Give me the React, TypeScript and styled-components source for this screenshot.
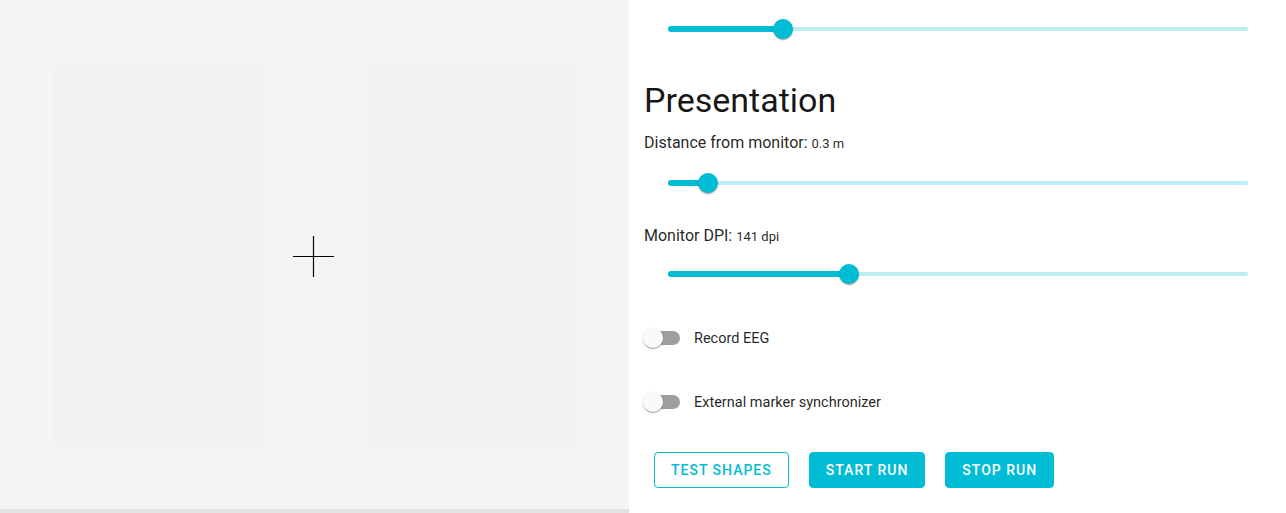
import React from "react";
import styled, { createGlobalStyle } from "styled-components";

const Global = createGlobalStyle`
  html, body { margin: 0; padding: 0; background: #ffffff; }
  body { font-family: Roboto, "Noto Sans", Arial, sans-serif; }
  * { box-sizing: border-box; }
`;

const CYAN = "#00bcd4";

const Page = styled.div`
  display: flex;
  width: 1286px;
  height: 513px;
  overflow: hidden;
`;

const LeftPane = styled.div`
  width: 629px;
  flex: none;
  display: flex;
  flex-direction: column;
  background: #f4f4f4;
`;

const Stage = styled.div`
  flex: 1;
  display: flex;
  align-items: flex-start;
  padding: 65px 53px 0 52px;
`;

const ShapePanel = styled.div`
  width: 210px;
  height: 382px;
  background: #f2f2f2;
`;

const FixationGap = styled.div`
  width: 105px;
  height: 382px;
  display: flex;
  align-items: center;
  justify-content: center;
`;

const ScrollTrack = styled.div`
  height: 4px;
  background: #e3e3e3;
  flex: none;
`;

const RightPane = styled.div`
  flex: 1;
  background: #ffffff;
  display: flex;
  flex-direction: column;
  padding: 3px 14px 0 15px;
`;

const SliderRow = styled.div<{ $h: number }>`
  height: ${(p) => p.$h}px;
  padding: 0 24px;
  display: flex;
  align-items: center;
`;

const Rail = styled.div`
  position: relative;
  flex: 1;
  height: 4px;
  border-radius: 2px;
  background: #bdedf4;
`;

const Track = styled.div`
  position: absolute;
  left: 0;
  top: -1px;
  height: 6px;
  border-radius: 3px;
  background: ${CYAN};
`;

const Thumb = styled.div`
  position: absolute;
  top: 50%;
  width: 20px;
  height: 20px;
  margin: -10px 0 0 -10px;
  border-radius: 50%;
  background: ${CYAN};
  box-shadow: 0 2px 1px -1px rgba(0, 0, 0, 0.2), 0 1px 1px 0 rgba(0, 0, 0, 0.14),
    0 1px 3px 0 rgba(0, 0, 0, 0.12);
`;

const Heading = styled.h2`
  margin: 24px 0 0 0;
  font-size: 34px;
  font-weight: 400;
  line-height: 42px;
  color: rgba(0, 0, 0, 0.92);
`;

const FieldLabel = styled.div<{ $mt: number }>`
  margin-top: ${(p) => p.$mt}px;
  font-size: 16px;
  line-height: 24px;
  color: rgba(0, 0, 0, 0.87);
`;

const FieldValue = styled.span`
  font-size: 13px;
`;

const SwitchRow = styled.label<{ $mt: number }>`
  margin-top: ${(p) => p.$mt}px;
  height: 38px;
  display: flex;
  align-items: center;
  margin-left: -1px;
`;

const SwitchBox = styled.span`
  position: relative;
  width: 37px;
  height: 20px;
  flex: none;
  display: flex;
  align-items: center;
`;

const SwitchTrack = styled.span`
  margin-left: 3px;
  width: 34px;
  height: 14px;
  border-radius: 7px;
  background: #9e9e9e;
`;

const SwitchKnob = styled.span`
  position: absolute;
  left: 0;
  top: 0;
  width: 20px;
  height: 20px;
  border-radius: 50%;
  background: #fafafa;
  box-shadow: 0 2px 1px -1px rgba(0, 0, 0, 0.2), 0 1px 1px 0 rgba(0, 0, 0, 0.14),
    0 1px 3px 0 rgba(0, 0, 0, 0.12);
`;

const SwitchText = styled.span`
  margin-left: 14px;
  font-size: 14.5px;
  color: rgba(0, 0, 0, 0.87);
`;

const ButtonBar = styled.div`
  margin-top: 31px;
  padding-left: 10px;
  display: flex;
  gap: 20px;
`;

const Button = styled.button<{ $outlined?: boolean }>`
  height: 36px;
  padding: 0 16px;
  border-radius: 4px;
  border: 1px solid ${CYAN};
  background: ${(p) => (p.$outlined ? "#ffffff" : CYAN)};
  color: ${(p) => (p.$outlined ? CYAN : "#ffffff")};
  font-family: Roboto, "Noto Sans", Arial, sans-serif;
  font-size: 14px;
  font-weight: 500;
  letter-spacing: 1px;
  text-transform: uppercase;
`;

function Slider({ pct, h }: { pct: number; h: number }) {
  return (
    <SliderRow $h={h}>
      <Rail>
        <Track style={{ width: `${pct}%` }} />
        <Thumb style={{ left: `${pct}%` }} />
      </Rail>
    </SliderRow>
  );
}

function Toggle({ label, mt }: { label: string; mt: number }) {
  return (
    <SwitchRow $mt={mt}>
      <SwitchBox>
        <SwitchTrack />
        <SwitchKnob />
      </SwitchBox>
      <SwitchText>{label}</SwitchText>
    </SwitchRow>
  );
}

export default function App() {
  return (
    <>
      <Global />
      <Page>
        <LeftPane>
          <Stage>
            <ShapePanel />
            <FixationGap>
              <svg width="41" height="41" viewBox="0 0 41 41">
                <line x1="0" y1="20.5" x2="41" y2="20.5" stroke="#000" strokeWidth="1.2" />
                <line x1="20.5" y1="0" x2="20.5" y2="41" stroke="#000" strokeWidth="1.2" />
              </svg>
            </FixationGap>
            <ShapePanel />
          </Stage>
          <ScrollTrack />
        </LeftPane>
        <RightPane>
          <Slider pct={19.8} h={52} />
          <Heading>Presentation</Heading>
          <FieldLabel $mt={10}>
            Distance from monitor: <FieldValue>0.3 m</FieldValue>
          </FieldLabel>
          <Slider pct={6.9} h={54} />
          <FieldLabel $mt={14}>
            Monitor DPI: <FieldValue>141 dpi</FieldValue>
          </FieldLabel>
          <Slider pct={31.2} h={50} />
          <Toggle label="Record EEG" mt={20} />
          <Toggle label="External marker synchronizer" mt={26} />
          <ButtonBar>
            <Button $outlined>Test shapes</Button>
            <Button>Start run</Button>
            <Button>Stop run</Button>
          </ButtonBar>
        </RightPane>
      </Page>
    </>
  );
}
